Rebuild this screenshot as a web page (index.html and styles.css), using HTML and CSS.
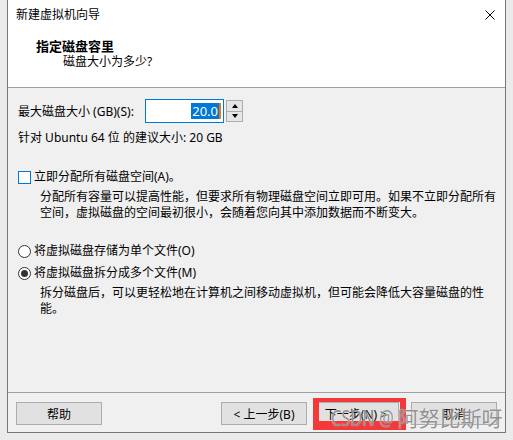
FILE: index.html
```html
<!DOCTYPE html>
<html lang="zh-CN">
<head>
    <meta charset="UTF-8">
    <title>新建虚拟机向导</title>
    <link rel="stylesheet" href="styles.css">
</head>
<body>
    <div class="window">
        <div class="titlebar">
            <span>新建虚拟机向导</span>
            <svg class="close" width="10" height="10" viewBox="0 0 10 10">
                <path d="M0.5 0.5 L9.5 9.5 M9.5 0.5 L0.5 9.5" stroke="#000" stroke-width="1" fill="none"/>
            </svg>
        </div>
        <div class="header">
            <div class="h-title">指定磁盘容里</div>
            <div class="h-sub">磁盘大小为多少?</div>
        </div>

        <div class="content">
            <div class="size-row">
                <span class="size-label">最大磁盘大小 (GB)(S):</span>
                <div class="spin-input"><span class="sel">20.0</span><span class="caret"></span></div>
                <div class="spinner">
                    <div class="spin-btn"><span class="arrow up"></span></div>
                    <div class="spin-btn"><span class="arrow down"></span></div>
                </div>
            </div>
            <div class="hint">针对 Ubuntu 64 位 的建议大小: 20 GB</div>

            <label class="check-row">
                <span class="checkbox"></span>
                <span>立即分配所有磁盘空间(A)。</span>
            </label>
            <p class="desc">分配所有容量可以提高性能，但要求所有物理磁盘空间立即可用。如果不立即分配所有<br>空间，虚拟磁盘的空间最初很小，会随着您向其中添加数据而不断变大。</p>

            <label class="radio-row first">
                <span class="radio"></span>
                <span>将虚拟磁盘存储为单个文件(O)</span>
            </label>
            <label class="radio-row">
                <span class="radio checked"></span>
                <span>将虚拟磁盘拆分成多个文件(M)</span>
            </label>
            <p class="desc">拆分磁盘后，可以更轻松地在计算机之间移动虚拟机，但可能会降低大容量磁盘的性<br>能。</p>
        </div>

        <div class="footer">
            <button class="btn">帮助</button>
            <div class="spacer"></div>
            <button class="btn">&lt; 上一步(B)</button>
            <button class="btn next">下一步(N) &gt;</button>
            <button class="btn cancel">取消</button>

            <div class="mark"></div>
            <div class="watermark"><span class="wm-latin">CSDN @</span>阿努比斯呀</div>
        </div>
    </div>
</body>
</html>
```

FILE: styles.css
```css
html, body {
    margin: 0;
    padding: 0;
    background: #ebebeb;
    font-family: 'Noto Sans', 'Noto Sans CJK SC', sans-serif;
    font-size: 12px;
    color: #000;
}
.window {
    box-sizing: border-box;
    margin-left: 7px;
    width: 499px;
    height: 433px;
    border: 1px solid #767676;
    border-top: none;
    background: #f0f0f0;
    display: flex;
    flex-direction: column;
}
.titlebar {
    height: 30px;
    line-height: 30px;
    background: #fff;
    padding: 0 10px 0 8px;
    display: flex;
    justify-content: space-between;
    align-items: center;
}
.header {
    background: #fff;
    padding: 9px 0 17px 28px;
    border-bottom: 1px solid #a0a0a0;
}
.h-title {
    font-weight: bold;
    font-size: 13px;
    line-height: 15px;
}
.h-sub {
    line-height: 16px;
    padding-left: 27px;
}

.content {
    flex: 1;
    padding: 11px 10px 0 10px;
}
.size-row {
    display: flex;
    align-items: center;
    height: 24px;
}
.size-label {
    width: 127px;
}
.spin-input {
    box-sizing: border-box;
    width: 79px;
    height: 24px;
    border: 1px solid #0078d7;
    background: #fff;
    display: flex;
    justify-content: flex-end;
    align-items: center;
    padding-right: 2px;
}
.sel {
    background: #0078d7;
    color: #fff;
    font-size: 13px;
    line-height: 16px;
    padding: 0 1px;
}
.caret {
    width: 2px;
    height: 16px;
    background: #e8741c;
}
.spinner {
    box-sizing: border-box;
    margin-left: 2px;
    width: 17px;
    height: 22px;
    border: 1px solid #adadad;
    background: #adadad;
    display: flex;
    flex-direction: column;
    gap: 1px;
}
.spin-btn {
    flex: 1;
    background: #e5e5e5;
    display: flex;
    justify-content: center;
    align-items: center;
}
.arrow {
    width: 0;
    height: 0;
    border-left: 3.5px solid transparent;
    border-right: 3.5px solid transparent;
}
.arrow.up {
    border-bottom: 4px solid #000;
}
.arrow.down {
    border-top: 4px solid #000;
}
.hint {
    margin-top: 7px;
    line-height: 16px;
}

.check-row, .radio-row {
    display: flex;
    align-items: center;
    gap: 3px;
    line-height: 16px;
}
.check-row {
    margin-top: 23px;
}
.checkbox {
    box-sizing: border-box;
    width: 13px;
    height: 13px;
    border: 1px solid #0078d7;
    background: #fff;
}
.radio-row.first {
    margin-top: 22px;
}
.radio-row + .radio-row {
    margin-top: 6px;
}
.radio {
    box-sizing: border-box;
    width: 13px;
    height: 13px;
    border: 1px solid #333;
    border-radius: 50%;
    background: #fff;
    display: flex;
    justify-content: center;
    align-items: center;
}
.radio.checked::after {
    content: '';
    width: 7px;
    height: 7px;
    border-radius: 50%;
    background: #333;
}
.desc {
    margin: 4px 0 0 22px;
    line-height: 16px;
    white-space: nowrap;
}

.footer {
    position: relative;
    border-top: 1px solid #a0a0a0;
    padding: 9px 8px 7px 8px;
    display: flex;
    gap: 6px;
}
.spacer {
    flex: 1;
}
.btn {
    box-sizing: border-box;
    width: 86px;
    height: 23px;
    background: #e1e1e1;
    border: 1px solid #adadad;
    font-family: inherit;
    font-size: 12px;
    color: #000;
    padding: 0;
}
.cancel {
    margin-left: 6px;
}
.mark {
    position: absolute;
    left: 305px;
    top: 5px;
    width: 81px;
    height: 19px;
    border: 6px solid #f33a3a;
    border-top-width: 4px;
    border-bottom-width: 9px;
    box-sizing: content-box;
}
.watermark {
    position: absolute;
    left: 323px;
    top: 12px;
    font-size: 21px;
    line-height: 26px;
    color: rgba(110, 110, 110, 0.75);
    text-shadow: 0 0 1px #fff;
    white-space: nowrap;
    pointer-events: none;
}
.wm-latin {
    display: inline-block;
    font-size: 21px;
    transform: scaleX(0.78);
    transform-origin: left center;
    margin-right: -14px;
}
```
